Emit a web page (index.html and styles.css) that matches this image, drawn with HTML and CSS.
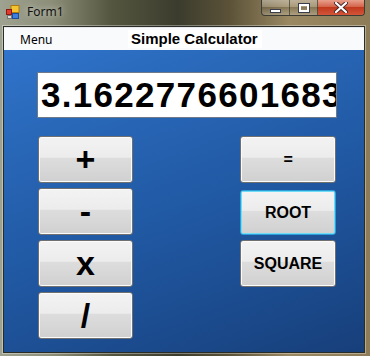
FILE: index.html
```html
<!DOCTYPE html>
<html lang="en">
<head>
    <meta charset="UTF-8">
    <meta name="viewport" content="width=device-width, initial-scale=1.0">
    <title>Form1</title>
    <link rel="stylesheet" href="styles.css">
</head>
<body>

    <div class="window">
        <div class="titlebar">
            <svg class="app-icon" width="14" height="14" viewBox="0 0 14 14">
                <rect x="5" y="0.5" width="8" height="7" fill="#f4c430" stroke="#b07a10"/>
                <rect x="0.5" y="4.5" width="5" height="5" fill="#e23b2e" stroke="#8a1a12"/>
                <rect x="6.5" y="8.5" width="6" height="5" fill="#3d7ee0" stroke="#1a4c9a"/>
                <rect x="1.5" y="10.5" width="4" height="3" fill="#dcdcdc" stroke="#777"/>
            </svg>
            <span class="caption">Form1</span>
            <div class="caption-buttons">
                <div class="cap-btn min"><span class="min-bar"></span></div>
                <div class="cap-btn max"><span class="max-box"></span></div>
                <div class="cap-btn close">
                    <svg width="14" height="11" viewBox="0 0 14 11">
                        <path d="M2 1 L12 10 M12 1 L2 10" stroke="#4a2a2a" stroke-width="4" stroke-linecap="round"/>
                        <path d="M2 1 L12 10 M12 1 L2 10" stroke="#fff" stroke-width="2.2" stroke-linecap="round"/>
                    </svg>
                </div>
            </div>
        </div>

        <div class="client">
            <div class="menubar">
                <span class="menu-item">Menu</span>
                <span class="form-title">Simple Calculator</span>
            </div>

            <div class="panel">
                <input type="text" id="display" class="display" value="3.16227766016838" readonly>

                <div class="keys">
                    <div class="col">
                        <button class="key big" onclick="setOp('+')">+</button>
                        <button class="key big" onclick="setOp('-')">-</button>
                        <button class="key big" onclick="setOp('*')">x</button>
                        <button class="key big" onclick="setOp('/')">/</button>
                    </div>
                    <div class="col">
                        <button class="key eq" onclick="calculate()">=</button>
                        <button class="key word focused" onclick="root()">ROOT</button>
                        <button class="key word" onclick="square()">SQUARE</button>
                    </div>
                </div>
            </div>
        </div>
    </div>

    <script>
        let first = null;
        let op = null;

        // Remember the first number and the operator
        function setOp(value) {
            first = parseFloat(document.getElementById('display').value) || 0;
            op = value;
            document.getElementById('display').value = '';
        }

        // Work out the result of the pending operation
        function calculate() {
            let second = parseFloat(document.getElementById('display').value) || 0;
            let result = second;
            if (op === '+') result = first + second;
            if (op === '-') result = first - second;
            if (op === '*') result = first * second;
            if (op === '/') result = first / second;
            document.getElementById('display').value = result;
            op = null;
        }

        function root() {
            let display = document.getElementById('display');
            display.value = Math.sqrt(parseFloat(display.value) || 0);
        }

        function square() {
            let display = document.getElementById('display');
            let n = parseFloat(display.value) || 0;
            display.value = n * n;
        }
    </script>

</body>
</html>
```

FILE: styles.css
```css
body {
    margin: 0;
    width: 370px;
    height: 356px;
    overflow: hidden;
    font-family: "Liberation Sans", Arial, sans-serif;
    background: linear-gradient(90deg, #9ea290 0%, #8c8e78 14%, #55563f 30%, #3b3c2d 48%, #5b5238 62%, #9a8862 78%, #8e7c58 100%);
}

.window {
    display: flex;
    flex-direction: column;
    height: 356px;
}

.titlebar {
    height: 26px;
    display: flex;
    align-items: flex-start;
    position: relative;
}

.app-icon {
    margin: 5px 0 0 6px;
}

.caption {
    font-family: "Noto Sans", sans-serif;
    font-size: 12px;
    color: #111;
    margin: 3px 0 0 7px;
    text-shadow: 0 0 6px rgba(255, 255, 255, 0.7);
}

.caption-buttons {
    position: absolute;
    top: 0;
    right: 5px;
    display: flex;
    height: 15px;
    border: 1px solid #3c3c34;
    border-top: none;
    border-radius: 0 0 4px 4px;
    overflow: hidden;
}

.cap-btn {
    display: flex;
    align-items: center;
    justify-content: center;
    height: 15px;
}

.min,
.max {
    width: 27px;
    background: linear-gradient(rgba(255, 255, 255, 0.35), rgba(255, 255, 255, 0.15) 50%, rgba(40, 40, 30, 0.15) 50%, rgba(255, 255, 255, 0.2));
    border-right: 1px solid rgba(40, 40, 30, 0.6);
}

.min-bar {
    width: 9px;
    height: 2px;
    margin-top: 6px;
    background: #fff;
    border: 1px solid #3a3e4a;
}

.max-box {
    width: 6px;
    height: 4px;
    border: 2px solid #fff;
    outline: 1px solid #3a3e4a;
}

.close {
    width: 46px;
    background: linear-gradient(#e8a08c, #d4644c 45%, #c23a1e 50%, #d2553a 100%);
}

.client {
    flex: 1;
    display: flex;
    flex-direction: column;
    margin: 0 5px 3px 3px;
    border: 1px solid #2a2c26;
    box-shadow: 0 0 0 1px rgba(255, 255, 255, 0.35);
}

.menubar {
    height: 22px;
    display: flex;
    align-items: center;
    background: #f9fafc;
    border-top: 1px solid #e6e8ee;
}

.menu-item {
    font-family: "Noto Sans", sans-serif;
    font-size: 12px;
    color: #000;
    margin-left: 16px;
    width: 91px;
}

.form-title {
    background: #fff;
    font-weight: bold;
    font-size: 15px;
    color: #000;
    padding: 0 4px 1px 3px;
    margin-left: 17px;
}

.panel {
    flex: 1;
    padding: 22px 0 0 33px;
    background: linear-gradient(160deg, #3074cb 0%, #2866b6 25%, #215aa5 50%, #1c4d91 75%, #173f7a 100%);
}

.display {
    display: block;
    width: 300px;
    height: 46px;
    box-sizing: border-box;
    border: 1px solid #6e7a8a;
    padding: 0 0 0 3px;
    font-family: "Liberation Sans", Arial, sans-serif;
    font-weight: bold;
    font-size: 35px;
    letter-spacing: 1.3px;
    color: #000;
    background: #fff;
    outline: none;
}

.keys {
    display: flex;
    gap: 106px;
    margin: 18px 0 0 1px;
}

.col {
    display: flex;
    flex-direction: column;
    gap: 5px;
    width: 96px;
}

.key {
    height: 47px;
    border: 1px solid #707070;
    border-radius: 3px;
    background: linear-gradient(#f3f3f3 0%, #ececec 45%, #dddddd 47%, #d0d0d0 100%);
    box-shadow: inset 0 0 0 1px #fbfbfb;
    font-family: "Liberation Sans", Arial, sans-serif;
    font-weight: bold;
    color: #000;
    padding: 0;
    cursor: pointer;
}

.col:first-child .key {
    width: 95px;
}

.big {
    font-size: 34px;
}

.eq {
    font-size: 16px;
    font-style: italic;
}

.word {
    font-size: 16px;
}

.focused {
    height: 45px;
    margin-top: 2px;
    border-color: #2c9fd6;
    box-shadow: inset 0 0 0 1px #6fdcf7;
}
```
